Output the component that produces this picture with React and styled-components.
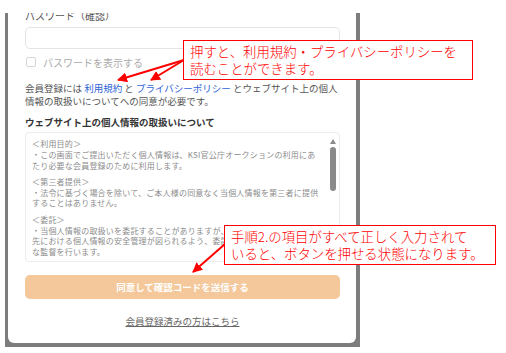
import React from "react";
import styled, { createGlobalStyle } from "styled-components";

const GlobalStyle = createGlobalStyle`
  body {
    margin: 0;
    background: #fff;
    font-family: "Noto Sans CJK JP", "Noto Sans", sans-serif;
  }
`;

const policy = [
  ["＜利用目的＞", "・この画面でご提出いただく個人情報は、KSI官公庁オークションの利用にあ", "たり必要な会員登録のために利用します。"],
  ["＜第三者提供＞", "・法令に基づく場合を除いて、ご本人様の同意なく当個人情報を第三者に提供", "することはありません。"],
  ["＜委託＞", "・当個人情報の取扱いを委託することがありますが、委託にあたっては、委託", "先における個人情報の安全管理が図られるよう、委託先に対する必要かつ適切", "な監督を行います。"],
];

const App = () => {
  return (
    <Page>
      <GlobalStyle />
      <Shot>
        <Modal>
          <FieldLabel>パスワード（確認）</FieldLabel>
          <Input />
          <CheckRow>
            <Checkbox />
            <span>パスワードを表示する</span>
          </CheckRow>
          <Notice>
            会員登録には <BlueLink>利用規約</BlueLink> と{" "}
            <BlueLink>プライバシーポリシー</BlueLink> とウェブサイト上の個人
            <br />
            情報の取扱いについてへの同意が必要です。
          </Notice>
          <Heading>ウェブサイト上の個人情報の取扱いについて</Heading>
          <PolicyBox>
            <PolicyText>
              {policy.map((block) => (
                <PolicyBlock key={block[0]}>
                  {block.map((line) => (
                    <div key={line}>{line}</div>
                  ))}
                </PolicyBlock>
              ))}
            </PolicyText>
            <Scrollbar>
              <UpArrow />
              <Thumb />
            </Scrollbar>
          </PolicyBox>
          <SubmitButton>同意して確認コードを送信する</SubmitButton>
          <LoginLink>会員登録済みの方はこちら</LoginLink>
        </Modal>
      </Shot>

      <Arrows width="506" height="353">
        <defs>
          <marker
            id="head"
            viewBox="0 0 10 10"
            refX="9"
            refY="5"
            markerWidth="5"
            markerHeight="5"
            orient="auto"
          >
            <path d="M0 0 L10 5 L0 10 z" fill="#f00" />
          </marker>
        </defs>
        <line x1="184" y1="60" x2="118" y2="80" stroke="#f00" strokeWidth="2" markerEnd="url(#head)" />
        <line x1="184" y1="60" x2="151" y2="80" stroke="#f00" strokeWidth="2" markerEnd="url(#head)" />
        <line x1="225" y1="244" x2="193" y2="272" stroke="#f00" strokeWidth="2" markerEnd="url(#head)" />
      </Arrows>

      <Callout $left={183} $top={40} $width={290}>
        押すと、利用規約・プライバシーポリシーを
        <br />
        読むことができます。
      </Callout>
      <Callout $left={224} $top={225} $width={272}>
        手順2.の項目がすべて正しく入力されて
        <br />
        いると、ボタンを押せる状態になります。
      </Callout>
    </Page>
  );
};

const Page = styled.div`
  position: relative;
  width: 506px;
  height: 353px;
  box-sizing: border-box;
  padding: 13px 0 0 5px;
  overflow: hidden;
`;

const Shot = styled.div`
  width: 355px;
  height: 334px;
  box-sizing: border-box;
  padding: 0 4px 4px 3px;
  background: #7d7d7d;
  overflow: hidden;
`;

const Modal = styled.div`
  height: 100%;
  box-sizing: border-box;
  background: #fff;
  border-radius: 0 0 6px 6px;
  padding: 0 16px 0 17px;
  display: flex;
  flex-direction: column;
`;

const FieldLabel = styled.div`
  margin-top: -3px;
  font-size: 10px;
  line-height: 12px;
  color: #555;
`;

const Input = styled.div`
  margin-top: 5px;
  height: 22px;
  box-sizing: border-box;
  border: 1px solid #e4e4e4;
  border-radius: 5px;
`;

const CheckRow = styled.div`
  margin-top: 7px;
  height: 12px;
  display: flex;
  align-items: center;
  gap: 7px;
  font-size: 10px;
  color: #aaa;
`;

const Checkbox = styled.span`
  margin-left: 1px;
  width: 10px;
  height: 10px;
  box-sizing: border-box;
  border: 1px solid #d6d6d6;
  border-radius: 2px;
`;

const Notice = styled.p`
  margin: 14px 0 0;
  font-size: 9.5px;
  line-height: 13px;
  color: #555;
  white-space: nowrap;
`;

const BlueLink = styled.span`
  color: #2d5fd6;
`;

const Heading = styled.h3`
  margin: 8px 0 0;
  font-size: 9.5px;
  line-height: 13px;
  font-weight: bold;
  color: #333;
`;

const PolicyBox = styled.div`
  margin-top: 3px;
  height: 130px;
  box-sizing: border-box;
  border: 1px solid #ececec;
  border-radius: 4px;
  display: flex;
  overflow: hidden;
`;

const PolicyText = styled.div`
  flex: 1;
  padding: 6px 0 0 6px;
  font-size: 8px;
  line-height: 10.8px;
  letter-spacing: 0.2px;
  color: #8c8c8c;
  white-space: nowrap;
  overflow: hidden;
`;

const PolicyBlock = styled.div`
  margin-bottom: 5.5px;
`;

const Scrollbar = styled.div`
  width: 12px;
  padding-top: 6px;
  display: flex;
  flex-direction: column;
  align-items: center;
`;

const UpArrow = styled.span`
  width: 0;
  height: 0;
  border-left: 3.5px solid transparent;
  border-right: 3.5px solid transparent;
  border-bottom: 5px solid #8a8a8a;
`;

const Thumb = styled.span`
  margin-top: 3px;
  width: 6px;
  height: 44px;
  border-radius: 3px;
  background: #8a8a8a;
`;

const SubmitButton = styled.div`
  margin-top: 13px;
  height: 24px;
  border-radius: 5px;
  background: #f4c89b;
  color: #fff;
  font-size: 9.5px;
  font-weight: bold;
  display: flex;
  align-items: center;
  justify-content: center;
`;

const LoginLink = styled.div`
  margin-top: 16px;
  align-self: center;
  font-size: 9.5px;
  line-height: 13px;
  color: #666;
  text-decoration: underline;
`;

const Arrows = styled.svg`
  position: absolute;
  left: 0;
  top: 0;
  pointer-events: none;
`;

const Callout = styled.div`
  position: absolute;
  left: ${(p) => p.$left}px;
  top: ${(p) => p.$top}px;
  width: ${(p) => p.$width}px;
  height: 40px;
  box-sizing: border-box;
  padding: 2px 0 0 6px;
  background: #fff;
  border: 1px solid #f00;
  color: #f00;
  font-size: 13.4px;
  font-weight: 300;
  line-height: 17px;
  white-space: nowrap;
`;

export default App;
